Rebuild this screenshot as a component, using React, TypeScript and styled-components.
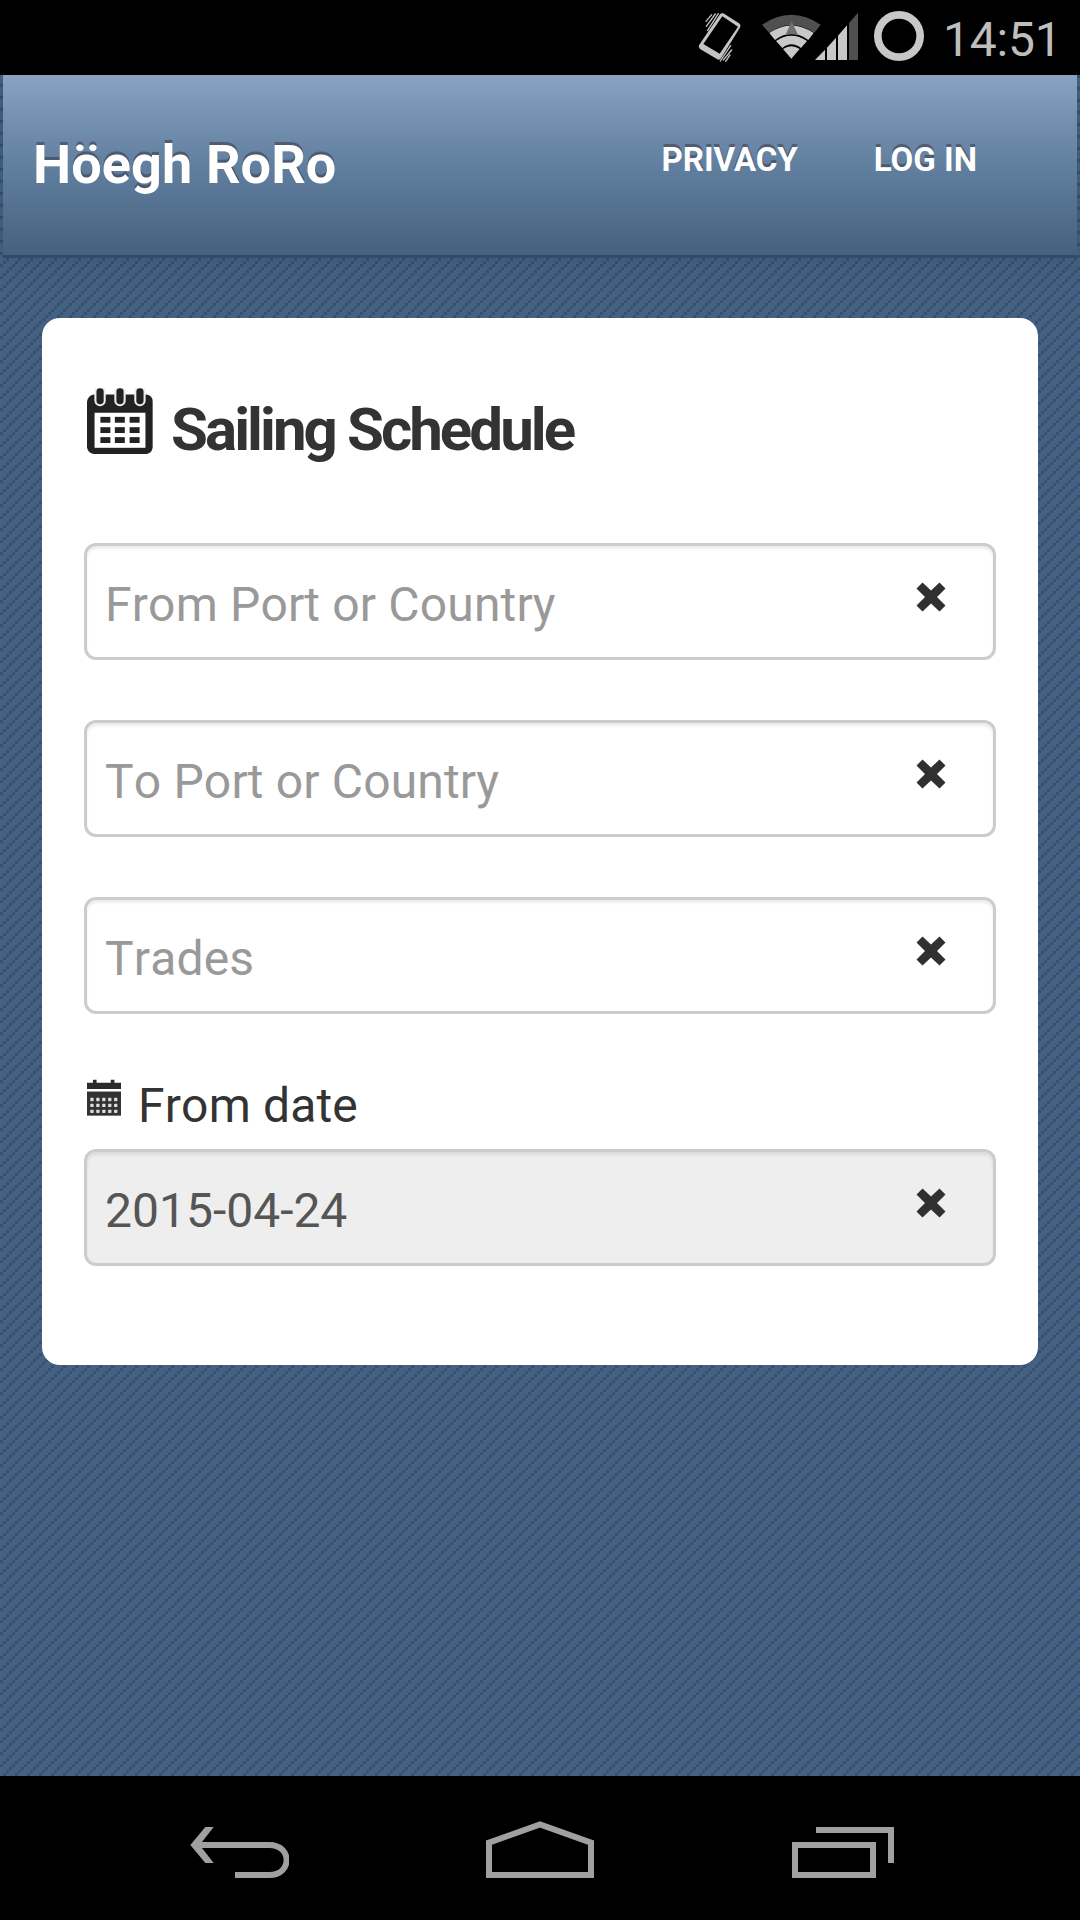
import React from "react";
import styled, { createGlobalStyle } from "styled-components";

const GlobalStyle = createGlobalStyle`
  *, *::before, *::after { box-sizing: border-box; }
  html, body { margin: 0; padding: 0; background: #000; }
  body { font-family: Roboto, "Noto Sans", sans-serif; color: #333; }
`;

const dot = "conic-gradient(at 3px 3px, transparent 270deg, #36516e 0)";

const Screen = styled.div`
  width: 1080px;
  height: 1920px;
  display: flex;
  flex-direction: column;
  overflow: hidden;
`;

const StatusBar = styled.div`
  height: 75px;
  flex: none;
  display: flex;
  justify-content: flex-end;
  padding-right: 25px;
  background: #000;
`;

const StatusIcon = styled.svg<{ $gap: number }>`
  display: block;
  flex: none;
  height: 75px;
  margin-right: ${(p) => p.$gap}px;
`;

const Clock = styled.div`
  width: 112px;
  font-size: 48px;
  line-height: 80px;
  letter-spacing: -0.2px;
  color: #bebebe;
  white-space: nowrap;
`;

const Page = styled.main`
  flex: 1;
  background-color: #446184;
  background-image: ${dot}, ${dot}, ${dot}, ${dot};
  background-size: 12px 12px;
  background-position: 0 9px, 3px 6px, 6px 3px, 9px 0;
`;

const NavBar = styled.header`
  height: 180px;
  margin: 0 3px;
  padding: 0 100px 0 30px;
  display: flex;
  align-items: flex-start;
  justify-content: space-between;
  background: linear-gradient(#88a2c3, #617f9f 50%, #45617f);
  box-shadow: 0 3px 0 #304b69, 0 3px 30px rgba(0, 0, 0, 0.12);
`;

const Brand = styled.div`
  padding-top: 60px;
  font-size: 54px;
  font-weight: 700;
  line-height: 60px;
  letter-spacing: 0.1px;
  color: #fff;
  text-shadow: 0 -3px 0 rgba(64, 64, 80, 0.6);
  white-space: nowrap;
`;

const NavLinks = styled.nav`
  display: flex;
  gap: 76px;
  padding-top: 65px;
`;

const NavLink = styled.a`
  font-size: 33px;
  font-weight: 700;
  line-height: 40px;
  color: #fff;
  text-shadow: 0 -3px 0 rgba(64, 64, 80, 0.6);
  white-space: nowrap;
`;

const Card = styled.section`
  margin: 63px 42px 0;
  padding: 67px 42px 99px;
  background: #fff;
  border-radius: 18px;
`;

const Heading = styled.h1`
  display: flex;
  align-items: flex-start;
  gap: 18px;
  margin: 0 0 68px;
  padding-left: 3px;
  height: 90px;
  font-size: 60px;
  line-height: 89px;
  font-weight: 700;
  letter-spacing: -2.95px;
  white-space: nowrap;
`;

const HeadingIcon = styled.svg`
  flex: none;
  width: 66px;
  height: 66px;
  margin-top: 3px;
`;

const FieldList = styled.div`
  display: flex;
  flex-direction: column;
  gap: 60px;
`;

const Field = styled.div<{ $filled?: boolean }>`
  display: flex;
  height: 117px;
  border: 3px solid #ccc;
  border-radius: 12px;
  background: ${(p) => (p.$filled ? "#eee" : "#fff")};
  box-shadow: inset 0 3px 3px rgba(0, 0, 0, 0.075);
`;

const Input = styled.input`
  flex: 1;
  min-width: 0;
  height: 111px;
  padding: 6px 18px 0;
  border: 0;
  outline: 0;
  background: transparent;
  font-family: inherit;
  font-size: 48px;
  font-kerning: none;
  color: #555;
  &::placeholder { color: #999; opacity: 1; letter-spacing: 0.16px; }
`;

const ClearButton = styled.button`
  flex: none;
  width: 30px;
  height: 30px;
  margin: 36px 47px 0 0;
  padding: 0;
  border: 0;
  background: none;
`;

const ClearGlyph = styled.svg`
  display: block;
  width: 30px;
  height: 30px;
`;

const DateLabel = styled.label`
  display: flex;
  align-items: flex-start;
  gap: 17px;
  height: 60px;
  margin: 62px 0 13px;
  padding-left: 3px;
  font-size: 48px;
  font-kerning: none;
  letter-spacing: 0.16px;
  line-height: 60px;
  white-space: nowrap;
`;

const DateIcon = styled.svg`
  flex: none;
  width: 34px;
  height: 37px;
  margin-top: 3px;
`;

const SystemBar = styled.footer`
  height: 144px;
  flex: none;
  display: flex;
  gap: 197px;
  padding-left: 190px;
  background: #000;
`;

const SystemIcon = styled.svg`
  display: block;
  flex: none;
  height: 144px;
  fill: none;
  stroke: #a0a0a0;
  stroke-width: 18;
`;

function VibrateIcon() {
  return (
    <StatusIcon width="44" viewBox="55 0 132 225" $gap={20}>
      <path
        fill="#c4c4c4"
        fillRule="evenodd"
        d="M121 43Q125 38 131 40L178 70Q184 74 182 81L124 175Q120 181 113 178L61 147Q55 143 58 136ZM128 49L71 132L120 161L175 80Z"
      />
      <path
        stroke="#c4c4c4"
        strokeWidth="4"
        strokeLinecap="round"
        fill="none"
        d="M79 64L96 44M80 79L107 42M84 91L116 41M122 183L153 137M131 180L156 150M138 184L151 165"
      />
    </StatusIcon>
  );
}

function WifiIcon() {
  return (
    <StatusIcon width="59" viewBox="247 0 177 225" $gap={-6}>
      <path fill="#505050" d="M247 74Q335 14 423 74L404 98Q335 52 268 98Z" />
      <path fill="#c8c8c8" d="M269 99Q335 54 402 99L386 120Q335 82 286 120Z" />
      <path fill="#707070" d="M336 64L356 106Q336 99 317 106Z" />
      <path fill="#c8c8c8" d="M289 123Q335 91 382 123L364 144Q335 122 308 144Z" />
      <path fill="#c8c8c8" d="M310 147Q335 130 360 147L335 176Z" />
    </StatusIcon>
  );
}

function SignalIcon() {
  return (
    <StatusIcon width="43" viewBox="405 0 129 225" $gap={16}>
      <path
        fill="#c8c8c8"
        d="M405 180L435 149V180ZM441 143L468 113V180H441ZM474 107L501 76V180H474Z"
      />
      <path fill="#505050" d="M507 69L534 38V180H507Z" />
    </StatusIcon>
  );
}

function RingIcon() {
  return (
    <StatusIcon width="50" viewBox="582 0 150 225" $gap={19}>
      <circle cx="657" cy="108" r="63.5" fill="none" stroke="#c8c8c8" strokeWidth="23" />
    </StatusIcon>
  );
}

function CalendarLarge() {
  const rows = [141, 171, 200];
  const cols = [118, 160, 203];
  const rings = [117, 175, 233];
  return (
    <HeadingIcon viewBox="79 57 192 192">
      <path
        fill="#222"
        d="M99 76H252Q270 78 270 97V230Q268 247 252 249H99Q82 247 79 230V97Q82 78 99 76Z"
      />
      <rect x="101" y="129" width="148" height="102" fill="#fff" />
      {rings.map((x) => (
        <rect
          key={x}
          x={x - 13.5}
          y="55"
          width="27"
          height="52"
          rx="13"
          fill="#222"
          stroke="#eee"
          strokeWidth="6"
        />
      ))}
      {rows.map((y) =>
        cols.map((x) => (
          <rect key={`${x}-${y}`} x={x} y={y} width="29" height="17" fill="#222" />
        ))
      )}
    </HeadingIcon>
  );
}

function CalendarSmall() {
  const rows = [119, 137, 155];
  const cols = [95, 113, 131, 149, 167];
  return (
    <DateIcon viewBox="80 58 103 110">
      <path fill="#2a2a2a" d="M80 68H98V59H109V68H152V59H163V68H183V87H80Z" />
      <rect x="80" y="95" width="103" height="73" fill="#333" />
      {rows.map((y) =>
        cols.map((x) => (
          <rect key={`${x}-${y}`} x={x - 5} y={y - 5} width="10" height="10" rx="2" fill="#ddd" />
        ))
      )}
    </DateIcon>
  );
}

type SearchFieldProps = { placeholder?: string; value?: string };

function SearchField({ placeholder, value }: SearchFieldProps) {
  return (
    <Field $filled={value !== undefined}>
      <Input placeholder={placeholder} defaultValue={value} readOnly={value !== undefined} />
      <ClearButton aria-label="Clear">
        <ClearGlyph viewBox="0 0 30 30">
          <path
            fill="#303030"
            d="M6.5 .5L15 8.500L23.500 .5L29.500 6.500L21 15L29.500 23.500L23.500 29.500L15 21.500L6.500 29.500L.5 23.500L9 15L.5 6.500Z"
          />
        </ClearGlyph>
      </ClearButton>
    </Field>
  );
}

export default function App() {
  return (
    <Screen>
      <GlobalStyle />
      <StatusBar>
        <VibrateIcon />
        <WifiIcon />
        <SignalIcon />
        <RingIcon />
        <Clock>14:51</Clock>
      </StatusBar>
      <Page>
        <NavBar>
          <Brand>Höegh RoRo</Brand>
          <NavLinks>
            <NavLink>PRIVACY</NavLink>
            <NavLink>LOG IN</NavLink>
          </NavLinks>
        </NavBar>
        <Card>
          <Heading>
            <CalendarLarge />
            Sailing Schedule
          </Heading>
          <FieldList>
            <SearchField placeholder="From Port or Country" />
            <SearchField placeholder="To Port or Country" />
            <SearchField placeholder="Trades" />
          </FieldList>
          <DateLabel>
            <CalendarSmall />
            From date
          </DateLabel>
          <SearchField value="2015-04-24" />
        </Card>
      </Page>
      <SystemBar>
        <SystemIcon width="99" viewBox="90 48 297 432">
          <path d="M117 255H328C397 255 397 345 328 345H225" />
          <path
            d="M136 201H161L119 255L161 309H136L91 255Z"
            fill="#a0a0a0"
            stroke="none"
          />
        </SystemIcon>
        <SystemIcon width="108" viewBox="978 48 324 432">
          <path d="M987 345V248L1140 193L1293 248V345Z" />
        </SystemIcon>
        <SystemIcon width="103" viewBox="153 48 309 432">
          <path d="M165 255H399V345H165ZM228 210H453V309" />
        </SystemIcon>
      </SystemBar>
    </Screen>
  );
}
